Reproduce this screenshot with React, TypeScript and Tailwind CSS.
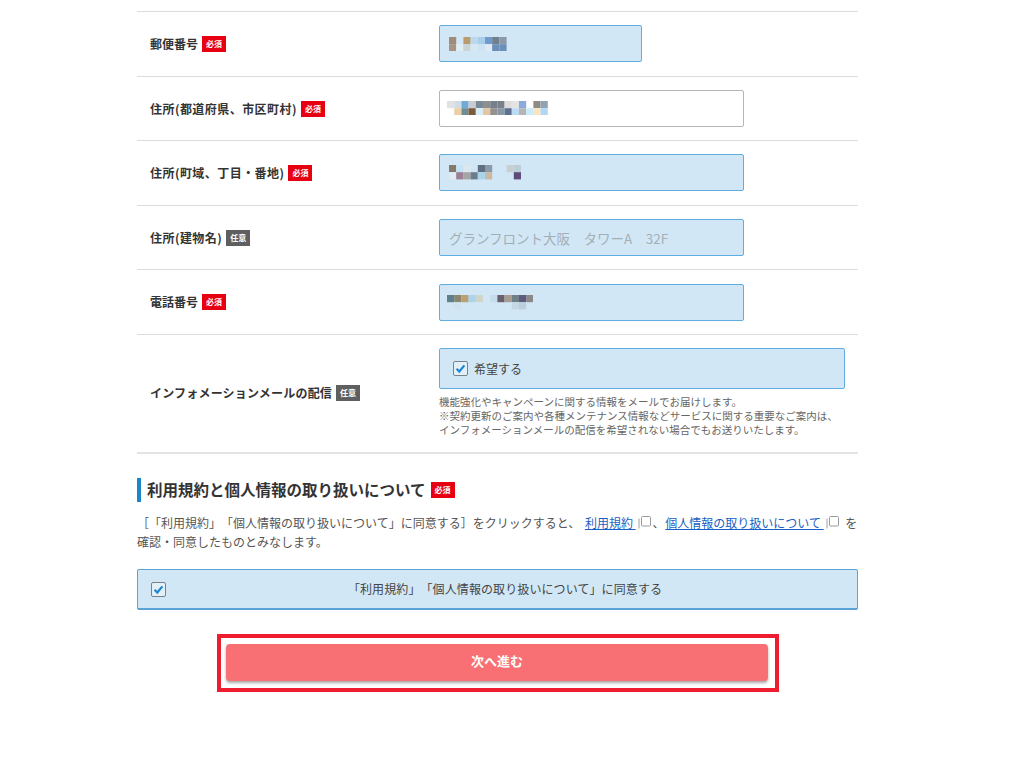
const zipCells = [
  ["#a08a78", null, "#b89c6c", "#bcd8ec", "#a9cfe8", "#6f9bd0", "#70808c", "#8a9aa8"],
  ["#a89484", "#dfeef2", "#c8d4d8", "#d8e8f2", "#cfe4f2", "#dfeaf3", "#6b8fb8", "#6b8fb8"],
];
const addr1Cells = [
  ["#e2e2e2", "#cfdde5", "#73a9d4", "#c8ccd0", "#7b8a99", "#8f8f8f", "#777f8a", "#7a7f8a", "#dcdcdc", "#e4e4e4", "#8ba9dd", null, "#8f8a86", "#8fa3b5"],
  [null, "#eccfa8", "#6f8b94", "#7d5a38", "#d5ecf9", "#e3c7a2", "#96908f", "#8799a8", "#5f6f90", "#bcdcf3", "#b5b5b5", "#c8ecfb", "#f9e4c2", "#b0d8f3"],
];
const addr2Cells = [
  ["#847a6c", "#c5e3f5", "#dbe8ef", null, "#5f6f80", "#8a9aa8", null, null, "#c8cfd0", "#bccfd8"],
  ["#dfeaf2", "#9c7e96", "#a5a5a5", "#6c7c8c", "#a9d4ec", "#c9b9a5", null, null, null, "#5c4a78"],
];
const telCells = [
  ["#607f8c", "#8a8672", "#b8a070", "#a9d4ec", "#d0d5cc", null, "#c5dcec", "#6a5f6c", "#a89c90", "#6f8088", "#5f5a80", "#8a8a8a"],
  [null, "#cfe2ee", null, null, null, null, null, null, null, "#c5d8e6", "#bccfdd", null],
];

// pixelated (redacted) field values
function Mosaic({ cells, className = "" }: { cells: (string | null)[][]; className?: string }) {
  const cols = cells[0].length;
  return (
    <svg
      width={cols * 7.2}
      height={cells.length * 7.2}
      viewBox={`0 0 ${cols} ${cells.length}`}
      className={`blur-[0.7px] ${className}`}
    >
      {cells.map((row, y) =>
        row.map((c, x) => (c ? <rect key={`${x}-${y}`} x={x} y={y} width="1" height="1" fill={c} /> : null)),
      )}
    </svg>
  );
}

function Badge({ optional }: { optional?: boolean }) {
  return (
    <span
      className={`inline-flex h-4 w-6 shrink-0 items-center justify-center text-[8px] font-bold leading-none text-white ${
        optional ? "bg-[#5f5f5f]" : "bg-[#e60012]"
      }`}
    >
      {optional ? "任意" : "必須"}
    </span>
  );
}

function Check() {
  return (
    <span className="flex h-[15px] w-[15px] shrink-0 items-center justify-center rounded-[2px] border border-[#77838c] bg-[#e4f0f8]">
      <svg width="11" height="11" viewBox="0 0 11 11" fill="none">
        <path d="M1.6 5.8 4.3 8.5 9.4 2.4" stroke="#1b87d6" strokeWidth="2.2" />
      </svg>
    </span>
  );
}

function ExternalIcon() {
  return (
    <svg width="13" height="13" viewBox="0 0 13 13" fill="none" className="mx-[2px] inline-block align-[-1px]">
      <path d="M1 2.5v10" stroke="#a0a0a0" />
      <rect x="3.5" y=".5" width="9" height="9.5" rx="1" stroke="#9a9a9a" />
    </svg>
  );
}

function Row({ label, optional, h, children }: { label: string; optional?: boolean; h: string; children: React.ReactNode }) {
  const tracking = label.includes("(") ? "tracking-[0.45px]" : label.length > 4 ? "tracking-[0.2px]" : "";
  return (
    <div className={`flex items-center border-t border-[#dcdcdc] ${h}`}>
      <div className="flex w-[302px] shrink-0 items-center gap-[4px] pl-[13px] text-[12px] font-bold text-[#333]">
        <span className={tracking}>{label}</span>
        <Badge optional={optional} />
      </div>
      {children}
    </div>
  );
}

function Field({ w, white, children }: { w: string; white?: boolean; children: React.ReactNode }) {
  return (
    <div
      className={`flex h-[37px] items-center rounded-[2px] border pl-[9px] ${w} ${
        white ? "border-[#b5b5b5] bg-white" : "border-[#5fade3] bg-[#d2e7f5]"
      }`}
    >
      {children}
    </div>
  );
}

export default function App() {
  return (
    <div className="h-[758px] overflow-hidden bg-white font-['Noto_Sans_CJK_JP',sans-serif] [text-spacing-trim:space-all]">
      <div className="ml-[137px] w-[721px] pt-[11px]">
        <Row label="郵便番号" h="h-[65px] pb-[1px]">
          <Field w="w-[203px]">
            <Mosaic cells={zipCells} className="mt-[1px]" />
          </Field>
        </Row>
        <Row label="住所(都道府県、市区町村)" h="h-[64px]">
          <Field w="w-[305px]" white>
            <Mosaic cells={addr1Cells} className="-ml-[2px] -mt-[1px]" />
          </Field>
        </Row>
        <Row label="住所(町域、丁目・番地)" h="h-[65px] pb-[1px]">
          <Field w="w-[305px]">
            <Mosaic cells={addr2Cells} />
          </Field>
        </Row>
        <Row label="住所(建物名)" optional h="h-[64px]">
          <input
            readOnly
            placeholder="グランフロント大阪　タワーA　32F"
            className="h-[37px] w-[305px] rounded-[2px] border border-[#5fade3] bg-[#d2e7f5] pl-[9px] text-[13.5px] outline-none placeholder:text-[#a3afb7]"
          />
        </Row>
        <Row label="電話番号" h="h-[65px]">
          <Field w="w-[305px]">
            <Mosaic cells={telCells} className="-ml-[2px] mt-[1px]" />
          </Field>
        </Row>
        <Row label="インフォメーションメールの配信" optional h="h-[118px] pb-[2px]">
          <div className="w-[406px]">
            <label className="flex h-[41px] items-center gap-[6px] rounded-[2px] border border-[#5fade3] bg-[#d2e7f5] pl-[13px] text-[12px] text-[#444]">
              <Check />
              希望する
            </label>
            <p className="mt-[6px] whitespace-nowrap text-[10.5px] leading-[14px] text-[#666]">
              機能強化やキャンペーンに関する情報をメールでお届けします。
              <br />
              ※契約更新のご案内や各種メンテナンス情報などサービスに関する重要なご案内は、
              <br />
              インフォメーションメールの配信を希望されない場合でもお送りいたします。
            </p>
          </div>
        </Row>
        <div className="border-t-2 border-[#e4e4e4] pt-[24px]">
          <div className="flex h-[24px] items-center gap-[5px] border-l-4 border-[#1b87c9] pl-[6px]">
            <h2 className="text-[15.5px] font-bold text-[#333]">利用規約と個人情報の取り扱いについて</h2>
            <Badge />
          </div>
          <p className="mt-[11px] whitespace-nowrap text-[12px] leading-[19px] text-[#555]">
            ［「利用規約」「個人情報の取り扱いについて」に同意する］をクリックすると、{" "}
            <a className="ml-[2px] text-[#1a5fc4] underline">利用規約 </a>
            <ExternalIcon />
            、 <a className="-ml-[2px] text-[#1a5fc4] underline">個人情報の取り扱いについて </a>
            <ExternalIcon /> <span className="ml-[2px]">を</span>
            <br />
            確認・同意したものとみなします。
          </p>
          <label className="mt-[18px] flex h-[41px] items-center rounded-[2px] border border-[#5ba3d6] border-b-2 bg-[#d2e7f5] px-[13px] text-[12px] text-[#444]">
            <Check />
            <span className="flex-1 text-center tracking-[0.1px]">「利用規約」「個人情報の取り扱いについて」に同意する</span>
          </label>
          <div className="ml-[80px] mt-[24px] w-[562px] border-[4px] border-[#ed1c2e] pb-[7px] pl-[5px] pr-[7px] pt-[6px]">
            <button className="h-[37px] w-full rounded-[4px] bg-[#f87073] pb-[3px] text-[13px] font-bold text-white shadow-[0_2px_3px_rgba(0,0,0,0.35)]">
              次へ進む
            </button>
          </div>
        </div>
      </div>
    </div>
  );
}
